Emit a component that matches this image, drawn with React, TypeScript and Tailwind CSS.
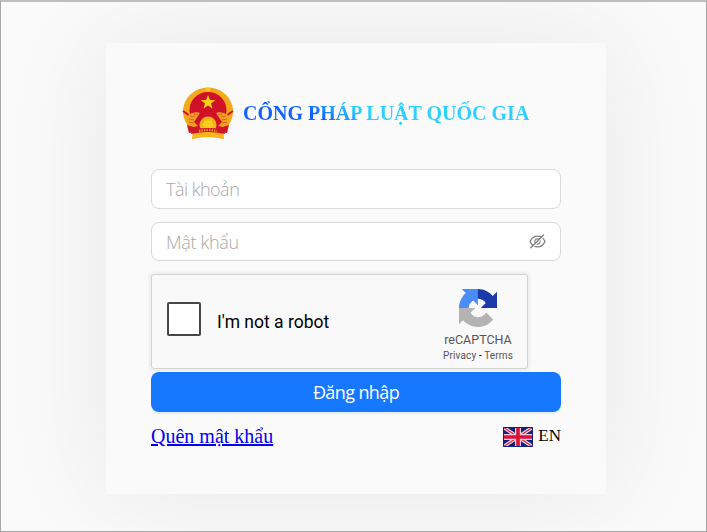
import { AiOutlineEyeInvisible } from "react-icons/ai";

function Emblem() {
  return (
    <svg className="h-[52px] w-[52px] shrink-0" viewBox="0 0 52 52">
      <path d="M11 43l-1 9q16-4 32 0l-1-9z" fill="#f6a91b" />
      <ellipse cx="26" cy="24.500" rx="25" ry="24" fill="#f4a91c" />
      <path d="M1 21l1 8 3 6 2 10q19 4 38 0l2-10 3-6 1-8-10 6H11z" fill="#f2a81c" />
      <ellipse cx="26" cy="23" rx="18.500" ry="18" fill="#d01127" />
      <path d="M10 27h32v13H10z" fill="#d01127" />
      <path d="M5 38q6 3 13 1h16q7 2 13-1l-2 8q-19-4-38 0z" fill="#cf1628" />
      <path d="M1 24l7 5 7-3M51 24l-7 5-7-3" fill="none" stroke="#cf1628" strokeWidth="2" />
      <path d="M6 28q6-4 12-2l-4 6-2 3 4 4-5 1-6-4zM46 28q-6-4-12-2l4 6 2 3-4 4 5 1 6-4z" fill="#f1a51e" />
      <path d="M8 29l5 1M7 32l5 1M7 35l5 1M12 27l4 1M44 29l-5 1M45 32l-5 1M45 35l-5 1M40 27l-4 1" stroke="#d8551f" strokeWidth=".9" />
      <circle cx="26" cy="38" r="8.500" fill="#f5b31c" />
      <circle cx="26" cy="38" r="5" fill="#fbce18" />
      <path d="M10 42q16-2 32 0l1 5q-17-4-34 0z" fill="#cf1628" />
      <path d="M17 44q9-2 18 0" fill="none" stroke="#e08a20" strokeWidth="2.500" strokeDasharray="1.500 1" />
      <path d="M12 47.500q14-4 28 0l2 4.500q-16-5-32 0z" fill="#f8b61b" />
      <path d="M26 8l1.900 5.100h5.500l-4.400 3.400 1.600 5.300-4.600-3.200-4.600 3.200 1.600-5.300-4.400-3.400h5.500z" fill="#fbce18" />
      <path d="M24 .5h4v4h-4z" fill="#fbc71b" />
    </svg>
  );
}

function RecaptchaLogo() {
  return (
    <svg className="h-[38px] w-[38px]" viewBox="0 0 64 64">
      <path fill="#1c3aa9" d="M64 31.955l-.033-1.370V4.687l-7.160 7.160C50.948 4.674 42.033.093 32.050.093c-10.400 0-19.622 4.960-25.458 12.640l11.736 11.860a15.550 15.550 0 0 1 4.754-5.334c2.050-1.600 4.952-2.906 8.968-2.906.485 0 .860.057 1.135.163 4.976.393 9.288 3.140 11.828 7.124l-8.307 8.307L64 31.953" />
      <path fill="#4b8df8" d="M31.862.094l-1.370.033H4.594l7.160 7.160C4.580 13.147 0 22.060 0 32.046c0 10.400 4.960 19.622 12.640 25.458L24.500 45.768a15.550 15.550 0 0 1-5.334-4.754c-1.600-2.050-2.906-4.952-2.906-8.968 0-.485.057-.860.163-1.135.393-4.976 3.140-9.288 7.124-11.828l8.307 8.307L31.860.095" />
      <path fill="#b3b3b3" d="M.001 32.045l.033 1.370v25.898l7.160-7.160c5.860 7.173 14.774 11.754 24.760 11.754 10.400 0 19.622-4.960 25.458-12.640l-11.736-11.860a15.550 15.550 0 0 1-4.754 5.334c-2.050 1.600-4.952 2.906-8.968 2.906-.485 0-.860-.057-1.135-.163-4.976-.393-9.288-3.140-11.828-7.124l8.307-8.307c-10.522.040-22.400.066-27.295-.005" />
    </svg>
  );
}

function BritishFlag() {
  return (
    <svg className="h-5 w-[30px]" viewBox="0 0 30 20">
      <path d="M0 0h30v20H0z" fill="#10237c" />
      <path d="M0 0l30 20M30 0L0 20" stroke="#e8d5e0" strokeWidth="3.600" />
      <path d="M0 0l30 20M30 0L0 20" stroke="#d8304e" strokeWidth="1.300" />
      <path d="M15 0v20M0 10h30" stroke="#f3c8d4" strokeWidth="6" />
      <path d="M15 0v20M0 10h30" stroke="#d8143a" strokeWidth="3.600" />
      <path d="M.5.5h29v19H.5z" fill="none" stroke="#10237c" />
    </svg>
  );
}

export default function App() {
  return (
    <main className="flex h-[532px] w-[707px] items-start overflow-hidden border border-t-2 border-[#a6a6a6] border-t-[#bebebe] bg-[#fafafa] pt-[41px] pl-[105px] font-['Liberation_Serif',serif]">
      <section className="flex h-[451px] w-[500px] flex-col bg-[#fafafa] px-[45px] pt-11 shadow-[0_0_100px_rgba(0,0,0,0.08)]">
        <header className="flex h-[53px] items-start pl-[31px]">
          <Emblem />
          <h1 className="ml-[9px] mt-[13px] whitespace-nowrap bg-[linear-gradient(30deg,#1060ff_28%,#2ed0ff_43%)] bg-clip-text text-[20px] leading-[26px] font-bold text-transparent">
            CỔNG PHÁP LUẬT QUỐC GIA
          </h1>
        </header>

        <form className="mt-[29px] flex flex-col" onSubmit={(e) => e.preventDefault()}>
          <div className="flex h-10 items-center rounded-lg border border-[#d9d9d9] bg-white px-[14px] pt-px">
            <input
              className="w-full bg-transparent font-['Open_Sans','Noto_Sans',sans-serif] text-[18px] font-light tracking-[-0.5px] outline-none placeholder:text-[#a8a8a8]"
              placeholder="Tài khoản"
            />
          </div>
          <div className="mt-[13px] flex h-[39px] items-center rounded-lg border border-[#d9d9d9] bg-white pr-[13px] pl-[14px]">
            <input
              type="password"
              className="w-full bg-transparent pt-px font-['Open_Sans','Noto_Sans',sans-serif] text-[18px] font-light tracking-[-0.3px] outline-none placeholder:text-[#a8a8a8]"
              placeholder="Mật khẩu"
            />
            <AiOutlineEyeInvisible className="h-[19px] w-[19px] shrink-0 text-[#808080]" />
          </div>

          <div className="mt-[13px] flex h-[95px] w-[377px] rounded-[3px] border border-[#d3d3d3] bg-[#f9f9f9] font-[Roboto,sans-serif] shadow-[0_0_4px_1px_rgba(0,0,0,0.08)]">
            <span className="mt-[27px] ml-[15px] h-[34px] w-[34px] shrink-0 rounded-[2px] border-2 border-[#4a4546] bg-white" />
            <span className="mt-[34px] ml-4 text-[17.500px] leading-[26px] whitespace-nowrap text-black">I'm not a robot</span>
            <div className="mt-[14px] mr-[13px] ml-auto flex w-[72px] flex-col items-center whitespace-nowrap text-[#555]">
              <RecaptchaLogo />
              <span className="mt-[5px] text-[12.500px] leading-4">reCAPTCHA</span>
              <span className="mt-px text-[10px] leading-[14px] tracking-[0.13px]">Privacy <span className="text-black">-</span> Terms</span>
            </div>
          </div>

          <button className="mt-[3px] h-10 rounded-lg bg-[#1677ff] pt-px font-['Open_Sans','Noto_Sans',sans-serif] text-[18px] tracking-[-0.6px] text-white shadow-[0_2px_0_rgba(5,145,255,0.1)]">
            Đăng nhập
          </button>
        </form>

        <footer className="mt-3 flex items-start justify-between">
          <a className="text-[20px] leading-6 text-[#0000ee] underline" href="#">Quên mật khẩu</a>
          <span className="flex items-start gap-[5px] text-[17px] leading-6 text-black">
            <span className="mt-[3px]"><BritishFlag /></span>
            EN
          </span>
        </footer>
      </section>
    </main>
  );
}
